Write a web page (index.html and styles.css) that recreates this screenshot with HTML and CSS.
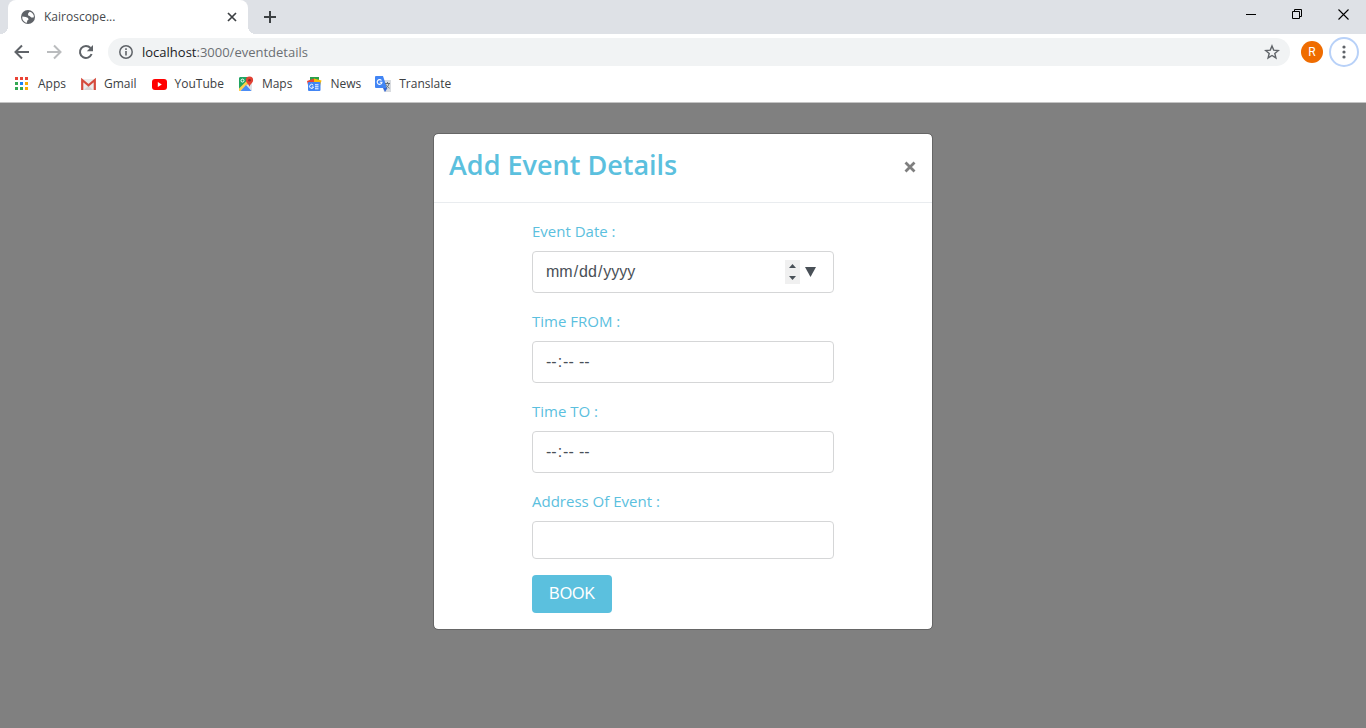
FILE: index.html
```
<!DOCTYPE html>
<html lang="en-US">
<head>
<meta charset="utf-8">
<title>Kairoscope...</title>
<link rel="stylesheet" href="styles.css">
</head>
<body>
<header class="browser">
  <div class="tab-strip">
    <div class="tab">
      <svg class="tab-icon" width="16" height="16" viewBox="0 0 16 16"><circle cx="8" cy="8" r="7" fill="#5f6368"/><path d="M9.6 2.7 8.2 4.3l-.2 1.9 1.6.8 1.7 1.4 2.3.2.3-1.7A5.8 5.8 0 0 0 9.6 2.7zM2.3 7.6l3.6.3 2.2 1.2.4 1.6-1.2.7-.4 2.4-1.4-.3A5.8 5.8 0 0 1 2.3 7.6z" fill="#fff"/></svg>
      <span class="tab-title">Kairoscope...</span>
      <button class="icon-button tab-close" aria-label="Close tab"><svg width="10" height="10" viewBox="0 0 10 10"><path d="m1 1 8 8M9 1 1 9" stroke="#3c4043" stroke-width="1.7"/></svg></button>
    </div>
    <button class="icon-button new-tab" aria-label="New tab"><svg width="12" height="12" viewBox="0 0 12 12"><path d="M6 0v12M0 6h12" stroke="#3c4043" stroke-width="2"/></svg></button>
    <div class="window-controls">
      <button class="icon-button" aria-label="Minimize"><svg width="10" height="10" viewBox="0 0 10 10"><path d="M0 5.5h10" stroke="#000"/></svg></button>
      <button class="icon-button" aria-label="Restore"><svg width="10" height="10" viewBox="0 0 10 10" fill="none" stroke="#000"><path d="M.5 2.5h7v7h-7zM2.5 2.5v-2h7v7h-2"/></svg></button>
      <button class="icon-button" aria-label="Close"><svg width="11" height="11" viewBox="0 0 11 11"><path d="m.5.5 10 10M10.5.5l-10 10" stroke="#000" stroke-width="1.1"/></svg></button>
    </div>
  </div>
  <div class="toolbar">
    <button class="icon-button nav-button" aria-label="Back"><svg width="16" height="16" viewBox="0 0 16 16" fill="none" stroke="#5f6368" stroke-width="2"><path d="M15 8H2M8 1.5 1.5 8 8 14.5"/></svg></button>
    <button class="icon-button nav-button" aria-label="Forward"><svg width="16" height="16" viewBox="0 0 16 16" fill="none" stroke="#babcbe" stroke-width="2"><path d="M1 8h13M8 1.5 14.5 8 8 14.5"/></svg></button>
    <button class="icon-button nav-button" aria-label="Reload"><svg width="16" height="16" viewBox="0 0 16 16"><path d="M13.6 10A6 6 0 1 1 12.5 4" fill="none" stroke="#5f6368" stroke-width="2"/><path d="M15 1v6.2H8.8z" fill="#5f6368"/></svg></button>
    <div class="address-bar">
      <svg width="16" height="16" viewBox="0 0 16 16"><circle cx="8" cy="8" r="6.2" fill="none" stroke="#5f6368" stroke-width="1.5"/><path d="M8 7v4.6M8 4.2v1.7" stroke="#5f6368" stroke-width="1.6"/></svg>
      <span class="url">localhost<span class="url-path">:3000/eventdetails</span></span>
      <button class="icon-button star" aria-label="Bookmark this page"><svg width="16" height="16" viewBox="0 0 16 16"><path d="m8 1.9 1.7 4.2 4.6.4-3.5 3 1.1 4.4L8 11.5l-3.9 2.4 1.1-4.4-3.5-3 4.6-.4z" fill="none" stroke="#5f6368" stroke-width="1.4"/></svg></button>
    </div>
    <button class="avatar" aria-label="Profile">R</button>
    <button class="menu-button" aria-label="Menu"><svg width="4" height="14" viewBox="0 0 4 14" fill="#5f6368"><circle cx="2" cy="2" r="1.6"/><circle cx="2" cy="7" r="1.6"/><circle cx="2" cy="12" r="1.6"/></svg></button>
  </div>
  <nav class="bookmarks" aria-label="Bookmarks">
    <a href="#apps"><svg width="16" height="16" viewBox="0 0 16 16"><path d="M1 1h3v3H1zM6 1h3v3H6zM11 1h3v3h-3z" fill="#ea4335"/><path d="M1 6h3v3H1zM1 11h3v3H1zM6 11h3v3H6z" fill="#34a853"/><path d="M6 6h3v3H6z" fill="#1a82f7"/><path d="M11 6h3v3h-3zM11 11h3v3h-3z" fill="#fbab04"/></svg>Apps</a>
    <a href="#gmail"><svg width="16" height="16" viewBox="0 0 16 16"><path d="M2 3h13v11H2z" fill="#ececec"/><path d="m4 14 4.500-4.500L13 14z" fill="#d6d6d6"/><path d="M2.200 14V4l6.300 5.300L14.800 4v10" fill="none" stroke="#d54b3d" stroke-width="2.200"/></svg>Gmail</a>
    <a href="#youtube"><svg width="16" height="16" viewBox="0 0 16 16"><rect x="1" y="3" width="15" height="11" rx="3" fill="#f00"/><path d="m6.800 6 4 2.500-4 2.500z" fill="#fff"/></svg>YouTube</a>
    <a href="#maps"><svg width="16" height="16" viewBox="0 0 16 16"><rect x="1" y="1" width="13" height="14" rx="1" fill="#dfe3e6"/><path d="M2 1h8v7l-9 5V2z" fill="#1fa463"/><path d="m1 12.500 8-8 2 2L2.500 15H1z" fill="#ffd04b"/><path d="m2.500 15 5.500-6 5.500 6z" fill="#4a8cf6"/><path d="M11.500.5a3.600 3.600 0 0 0-3.600 3.700c0 2.500 3.100 3.600 3.600 6.800.5-3.200 3.600-4.300 3.600-6.800A3.600 3.600 0 0 0 11.500.5z" fill="#e34133"/><circle cx="11.500" cy="4.200" r="1.300" fill="#8d2c25"/><circle cx="4.500" cy="4.600" r="1.500" fill="none" stroke="#fff"/></svg>Maps</a>
    <a href="#news"><svg width="16" height="16" viewBox="0 0 16 16"><path d="M4 1h9v6H4z" fill="#28a14b"/><path d="m1 5 7-2.500V9H2z" fill="#ea4335"/><path d="m8 2.500 7.500 2L14 10H8z" fill="#fbbc04"/><rect x="2" y="6" width="12.500" height="9" rx="1" fill="#4285f4"/><path d="M7.200 9.200A2 2 0 1 0 7.500 11H5.800M9 8.800h3.500M9 10.800h3.500M9 12.800h3.500" fill="none" stroke="#fff"/></svg>News</a>
    <a href="#translate"><svg width="16" height="16" viewBox="0 0 16 16"><path d="M6 4h10v12H9z" fill="#d9dce0"/><path d="M8 12h4.500L10 16z" fill="#3367d6"/><path d="M1 0h7l4 12H1a1 1 0 0 1-1-1V1a1 1 0 0 1 1-1z" fill="#4285f4"/><path d="M6.500 4.500A2.400 2.400 0 1 0 7 6.200H4.800" fill="none" stroke="#fff" stroke-width="1.100"/><path d="M10 7.500h5M12.500 6v1.500M14 7.500c-.5 2.300-1.500 3.400-3 4.500M11 8.500c.8 1.800 2 2.800 3.500 3.700" fill="none" stroke="#69747c"/></svg>Translate</a>
  </nav>
</header>
<main class="page">
  <section class="modal" role="dialog" aria-labelledby="dialog-title">
    <div class="modal-header">
      <h1 id="dialog-title">Add Event Details</h1>
      <button class="icon-button modal-close" aria-label="Close dialog"><svg width="12" height="12" viewBox="0 0 12 12"><path d="m1.500 1.500 9 9M10.500 1.500l-9 9" stroke="#7f7f7f" stroke-width="2.800"/></svg></button>
    </div>
    <form class="modal-body">
      <div class="group">
        <label for="event-date">Event Date :</label>
        <div class="control">
          <input id="event-date" type="date">
          <span class="spinner">
            <button type="button" aria-label="Increase"><svg width="7" height="4" viewBox="0 0 7 4"><path d="M3.500 0 7 4H0z" fill="#495057"/></svg></button>
            <button type="button" aria-label="Decrease"><svg width="7" height="4" viewBox="0 0 7 4"><path d="M0 0h7L3.500 4z" fill="#495057"/></svg></button>
          </span>
          <button class="picker" type="button" aria-label="Open calendar"><svg width="11" height="10" viewBox="0 0 11 10"><path d="M0 0h11L5.500 10z" fill="#495057"/></svg></button>
        </div>
      </div>
      <div class="group">
        <label for="time-from">Time FROM :</label>
        <div class="control"><input id="time-from" type="time"></div>
      </div>
      <div class="group">
        <label for="time-to">Time TO :</label>
        <div class="control"><input id="time-to" type="time"></div>
      </div>
      <div class="group">
        <label for="address">Address Of Event :</label>
        <div class="control control-text"><input id="address" type="text"></div>
      </div>
      <button class="book" type="submit">BOOK</button>
    </form>
  </section>
</main>
</body>
</html>
```
FILE: styles.css
```
* { box-sizing: border-box; }
body {
  margin: 0;
  min-height: 100vh;
  display: flex;
  flex-direction: column;
  background: #808080;
  font-family: "Open Sans", "Noto Sans", sans-serif;
}
svg { display: block; flex: none; }
button { padding: 0; border: 0; background: none; font: inherit; }
input { font: inherit; }
.icon-button { display: flex; align-items: center; justify-content: center; }

.browser { background: #fff; border-bottom: 1px solid #c4c4c4; }
.tab-strip { display: flex; height: 34px; background: #dee1e6; padding-left: 8px; }
.tab {
  position: relative;
  display: flex;
  align-items: center;
  gap: 8px;
  width: 240px;
  padding: 0 11px 0 12px;
  background: #fff;
  border-radius: 8px 8px 0 0;
}
.tab::before, .tab::after {
  content: "";
  position: absolute;
  bottom: 0;
  width: 8px;
  height: 8px;
}
.tab::before { right: 100%; background: radial-gradient(circle at 0 0, #dee1e6 8px, #fff 8px); }
.tab::after { left: 100%; background: radial-gradient(circle at 100% 0, #dee1e6 8px, #fff 8px); }
.tab-title { flex: 1; font-size: 12px; line-height: 16px; color: #45494d; }
.new-tab { margin-left: 16px; }
.window-controls { display: flex; margin-left: auto; }
.window-controls button { width: 46px; height: 28px; }

.toolbar { display: flex; align-items: center; height: 36px; padding: 0 7px 0 6px; }
.nav-button { width: 32px; height: 32px; }
.address-bar {
  display: flex;
  align-items: center;
  gap: 8px;
  flex: 1;
  height: 28px;
  margin-left: 6px;
  padding: 0 10px;
  border-radius: 14px;
  background: #f1f3f4;
}
.url { flex: 1; font-size: 13px; line-height: 20px; color: #202124; }
.url-path { color: #6b6f73; }
.avatar {
  width: 22px;
  height: 22px;
  margin-left: 11px;
  border-radius: 50%;
  background: #ef6c00;
  color: #fff;
  font: 12px/22px Roboto, sans-serif;
}
.menu-button {
  display: flex;
  align-items: center;
  justify-content: center;
  width: 30px;
  height: 30px;
  margin-left: 6px;
  border: 2px solid #b8d1f8;
  border-radius: 50%;
}
.bookmarks { display: flex; gap: 14px; height: 32px; padding: 2px 14px 0; }
.bookmarks a {
  display: flex;
  align-items: flex-start;
  gap: 8px;
  padding-top: 4px;
  font-size: 12px;
  line-height: 16px;
  color: #3c4043;
  text-decoration: none;
}

.page { flex: 1; padding: 30px 16px; }
.modal {
  max-width: 500px;
  margin: 0 auto;
  background: #fff;
  background-clip: padding-box;
  border: 1px solid #666;
  border-radius: 5px;
}
.modal-header {
  display: flex;
  justify-content: space-between;
  align-items: flex-start;
  padding: 15px 15px 17px;
  border-bottom: 1px solid #e9ecef;
}
.modal-header h1 { margin: 0; font-size: 27px; font-weight: 600; line-height: 32px; color: #5bc0de; }
.modal-close { width: 14px; height: 36px; }
.modal-body { padding: 16px 98px; }
.group { margin-bottom: 16px; }
.group label { display: block; margin-bottom: 8px; font-size: 15px; line-height: 24px; color: #5bc0de; }
.control {
  display: flex;
  align-items: center;
  height: 42px;
  padding: 0 17px 0 12px;
  border: 1px solid #d5d6d7;
  border-radius: 4px;
}
.control-text { height: 38px; }
.control input {
  flex: 1;
  min-width: 0;
  padding: 0;
  border: 0;
  outline: 0;
  background: none;
  color: #495057;
  font: 16px/24px "Liberation Sans", Arial, sans-serif;
}
.control input::-webkit-calendar-picker-indicator { display: none; }
.spinner { display: flex; flex-direction: column; width: 15px; height: 24px; background: #f0f0f0; }
.spinner button { display: flex; flex: 1; align-items: center; justify-content: center; }
.picker { margin-left: 5px; }
.book {
  display: block;
  height: 38px;
  padding: 0 17px;
  border-radius: 4px;
  background: #5bc0de;
  color: #fff;
  font: 16px/24px "Liberation Sans", Arial, sans-serif;
}
```
